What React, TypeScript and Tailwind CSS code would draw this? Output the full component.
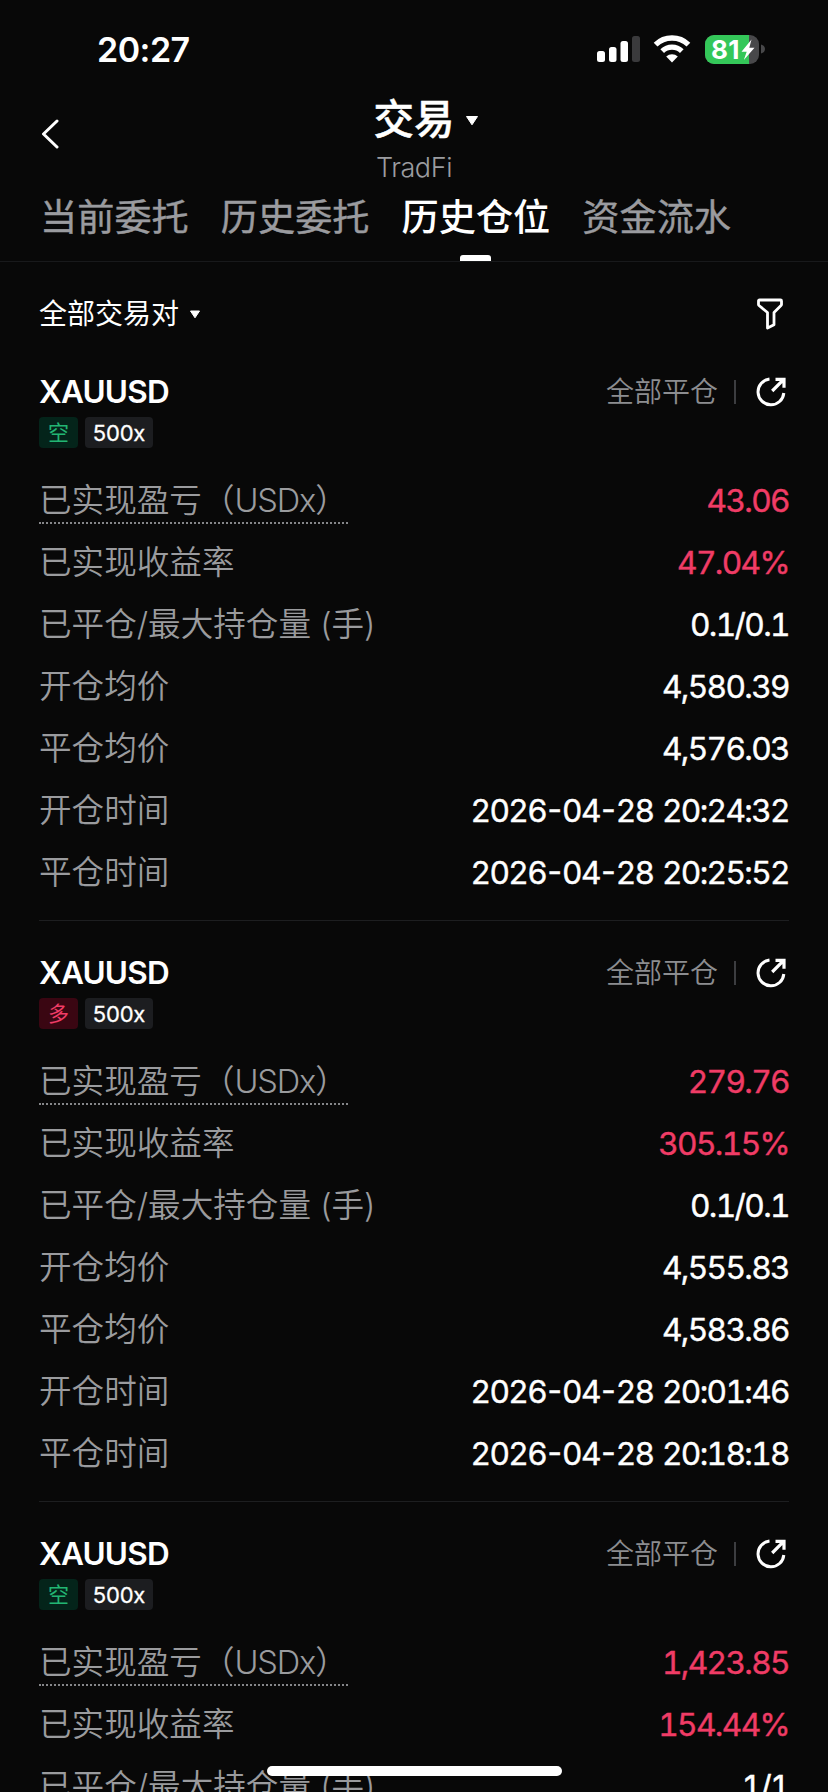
import React from "react";

type Position = {
  symbol: string;
  side: "short" | "long";
  leverage: string;
  pnl: string;
  roi: string;
  volume: string;
  openPrice: string;
  closePrice: string;
  openTime: string;
  closeTime: string;
};

const positions: Position[] = [
  {
    symbol: "XAUUSD",
    side: "short",
    leverage: "500x",
    pnl: "43.06",
    roi: "47.04%",
    volume: "0.1/0.1",
    openPrice: "4,580.39",
    closePrice: "4,576.03",
    openTime: "2026-04-28 20:24:32",
    closeTime: "2026-04-28 20:25:52",
  },
  {
    symbol: "XAUUSD",
    side: "long",
    leverage: "500x",
    pnl: "279.76",
    roi: "305.15%",
    volume: "0.1/0.1",
    openPrice: "4,555.83",
    closePrice: "4,583.86",
    openTime: "2026-04-28 20:01:46",
    closeTime: "2026-04-28 20:18:18",
  },
  {
    symbol: "XAUUSD",
    side: "short",
    leverage: "500x",
    pnl: "1,423.85",
    roi: "154.44%",
    volume: "1/1",
    openPrice: "",
    closePrice: "",
    openTime: "",
    closeTime: "",
  },
];

const tabs = ["当前委托", "历史委托", "历史仓位", "资金流水"];
const activeTab = "历史仓位";

function StatusBar() {
  return (
    <div className="flex h-[98px] items-center justify-between pl-[97px] pr-[63px]">
      <span className="pt-[2px] text-[34px] font-semibold leading-none tracking-[-0.015em] text-white">20:27</span>
      <div className="flex items-center">
        <svg width="44" height="28" viewBox="0 0 44 28" className="mr-[12px]">
          <rect x="0" y="16" width="8" height="11" rx="2.5" fill="#fff" />
          <rect x="12" y="12" width="7.5" height="15" rx="2.5" fill="#fff" />
          <rect x="23.5" y="6" width="7.5" height="21" rx="2.5" fill="#fff" />
          <rect x="35" y="1" width="8" height="26" rx="2.5" fill="#3a3a3c" />
        </svg>
        <svg width="38" height="28" viewBox="0 0 38 28" className="mr-[14px]">
          <path d="M2.6 9.6a23.5 23.5 0 0 1 32.8 0" fill="none" stroke="#fff" strokeWidth="5.4" />
          <path d="M9.2 16.2a14 14 0 0 1 19.6 0" fill="none" stroke="#fff" strokeWidth="5.2" />
          <path d="M19 27.5l-5.8-5.9a8.3 8.3 0 0 1 11.6 0z" fill="#fff" />
        </svg>
        <div className="flex items-center gap-[2px]">
          <div className="relative flex h-[29px] w-[54px] overflow-hidden rounded-[9px] bg-[#48484a]">
            <div className="h-full w-[44px] bg-[#34c759]" />
            <span className="absolute left-[6px] top-0 text-[26px] font-bold leading-[29px] tracking-[0.01em] text-white">81</span>
            <svg width="14" height="22" viewBox="0 0 14 22" className="absolute left-[36px] top-[4px]">
              <path d="M10.500 0.500L0.500 12.800h5.200L2.800 21 13.500 8.800H8.300z" fill="#fff" />
            </svg>
          </div>
          <svg width="4" height="10" viewBox="0 0 4 10">
            <path d="M0 0.5C2.5 1 4 3 4 5S2.5 9 0 9.500z" fill="#48484a" />
          </svg>
        </div>
      </div>
    </div>
  );
}

function Header() {
  return (
    <header className="grid h-[84px] grid-cols-[1fr_auto_1fr] items-start">
      <svg width="18" height="30" viewBox="0 0 18 30" className="ml-[41px] mt-[21px]">
        <path d="M16 2L2.500 15 16 28" fill="none" stroke="#fff" strokeWidth="3" strokeLinecap="round" strokeLinejoin="round" />
      </svg>
      <div className="flex flex-col items-center pt-[1px]">
        <div className="relative h-[46px] text-[40.500px] font-medium leading-[42px] text-white [-webkit-text-stroke:0.5px_#fff]">
          交易
          <svg width="14" height="10" viewBox="0 0 14 10" className="absolute -right-[24px] top-[17px]">
            <path d="M1.500 0.500h11L7 8.800z" fill="#fff" stroke="#fff" strokeLinejoin="round" />
          </svg>
        </div>
        <div className="text-[27px] font-[350] leading-[45px] tracking-[-0.015em] text-[#9b9ca0]">TradFi</div>
      </div>
      <div />
    </header>
  );
}

function Tabs() {
  return (
    <nav className="flex h-[80px] gap-[32px] border-b border-[#18191b] pl-[40px]">
      {tabs.map((tab) => (
        <div key={tab} className="flex flex-col items-center justify-between">
          <span
            className={
              tab === activeTab
                ? "text-[37.200px] font-medium leading-[72px] text-white"
                : "text-[37.200px] leading-[72px] text-[#9a9b9f] [-webkit-text-stroke:0.4px_#9a9b9f]"
            }
          >
            {tab}
          </span>
          {tab === activeTab && <span className="h-[6px] w-[31px] rounded-t-[3px] bg-white" />}
        </div>
      ))}
    </nav>
  );
}

function FilterBar() {
  return (
    <div className="flex h-[78px] items-center justify-between pl-[39px] pr-[44px] pt-[26px]">
      <div className="flex items-center gap-[10px] text-[28px] text-white">
        全部交易对
        <svg width="12" height="9" viewBox="0 0 12 9">
          <path d="M1.500 1h9L6 7.800z" fill="#fff" stroke="#fff" strokeLinejoin="round" />
        </svg>
      </div>
      <svg width="28" height="32" viewBox="0 0 28 32" fill="none" stroke="#fff" strokeWidth="2.800" strokeLinejoin="round">
        <path d="M3.500 2h21q1 0 1 1v3.400q0 .6-.5 1.100L18 14.500v12.200L11.500 30V14.500L3 7.500q-.5-.5-.5-1.100V3q0-1 1-1z" />
      </svg>
    </div>
  );
}

// Dates carry tighter dashes than the tabular digits around them
function Value({ text }: { text: string }) {
  return (
    <>
      {text.split("-").map((part, i) => (
        <React.Fragment key={i}>
          {i > 0 && <span className="mx-[-1.500px] [font-feature-settings:'case']">-</span>}
          {part}
        </React.Fragment>
      ))}
    </>
  );
}

function Row({ label, value, red, dotted }: { label: React.ReactNode; value: string; red?: boolean; dotted?: boolean }) {
  return (
    <div className="flex h-[62px] items-center justify-between">
      <span
        className={
          dotted
            ? "border-b-2 border-dotted border-[#858689] pt-px text-[32.600px] font-[350] leading-[43px] text-[#9a9b9e]"
            : "pb-[2px] text-[32.600px] font-[350] leading-[44px] text-[#9a9b9e]"
        }
      >
        {label}
      </span>
      <span
        className={
          red
            ? "pb-px text-[31.700px] tabular-nums tracking-[-0.052em] text-[#f03c66] [-webkit-text-stroke:0.4px_#f03c66]"
            : "pb-px text-[31.700px] tabular-nums tracking-[-0.052em] text-white [-webkit-text-stroke:0.4px_#fff] [word-spacing:1.500px]"
        }
      >
        <Value text={value} />
      </span>
    </div>
  );
}

function PositionCard({ item }: { item: Position }) {
  return (
    <section className="mx-[39px] h-[581px] border-b border-[#1d1e20] pt-[32px]">
      <div className="flex h-[40px] items-center justify-between">
        <h2 className="text-[31.500px] font-semibold tracking-[-0.025em] text-white">{item.symbol}</h2>
        <div className="flex items-center pr-[3px]">
          <span className="text-[28px] font-[350] text-[#8c8d90]">全部平仓</span>
          <span className="ml-[16px] h-[24px] w-[2px] bg-[#3c3d40]" />
          <svg width="32" height="32" viewBox="0 0 32 32" className="ml-[19px] -mr-[1px]" fill="none" stroke="#fff" strokeWidth="3">
            <path d="M14.500 3.100A12.900 12.900 0 1 0 28.800 17" />
            <path d="M17.200 15L28 4.200M20.500 3.300h8.500v8.500" strokeWidth="3.200" />
          </svg>
        </div>
      </div>
      <div className="mt-[5px] flex h-[31px] gap-[7px]">
        <span
          className={
            item.side === "short"
              ? "flex w-[39px] items-center justify-center rounded-[4px] bg-[#04241a] text-[21px] text-[#22b573]"
              : "flex w-[39px] items-center justify-center rounded-[4px] bg-[#3a0612] text-[21px] text-[#f03c66]"
          }
        >
          {item.side === "short" ? "空" : "多"}
        </span>
        <span className="flex w-[68px] items-center justify-center rounded-[4px] bg-[#1c1d20] pt-[2px] text-[22px] tracking-[-0.01em] text-white [-webkit-text-stroke:0.3px_#fff]">
          {item.leverage}
        </span>
      </div>
      <div className="mt-[22px]">
        <Row
          label={
            <>
              已实现盈亏（<span className="tracking-[-0.035em]">USDx</span>）
            </>
          }
          value={item.pnl}
          red
          dotted
        />
        <Row label="已实现收益率" value={item.roi} red />
        <Row label="已平仓/最大持仓量 (手)" value={item.volume} />
        <Row label="开仓均价" value={item.openPrice} />
        <Row label="平仓均价" value={item.closePrice} />
        <Row label="开仓时间" value={item.openTime} />
        <Row label="平仓时间" value={item.closeTime} />
      </div>
    </section>
  );
}

export default function App() {
  return (
    <div className="relative h-[1792px] w-[828px] overflow-hidden bg-[#080808] font-['Inter','Noto_Sans_CJK_SC',sans-serif]">
      <StatusBar />
      <Header />
      <Tabs />
      <FilterBar />
      {positions.map((item, i) => (
        <PositionCard key={i} item={item} />
      ))}

      {/* Home indicator */}
      <div className="absolute bottom-[16px] left-[267px] h-[10px] w-[295px] rounded-full bg-white" />
    </div>
  );
}
